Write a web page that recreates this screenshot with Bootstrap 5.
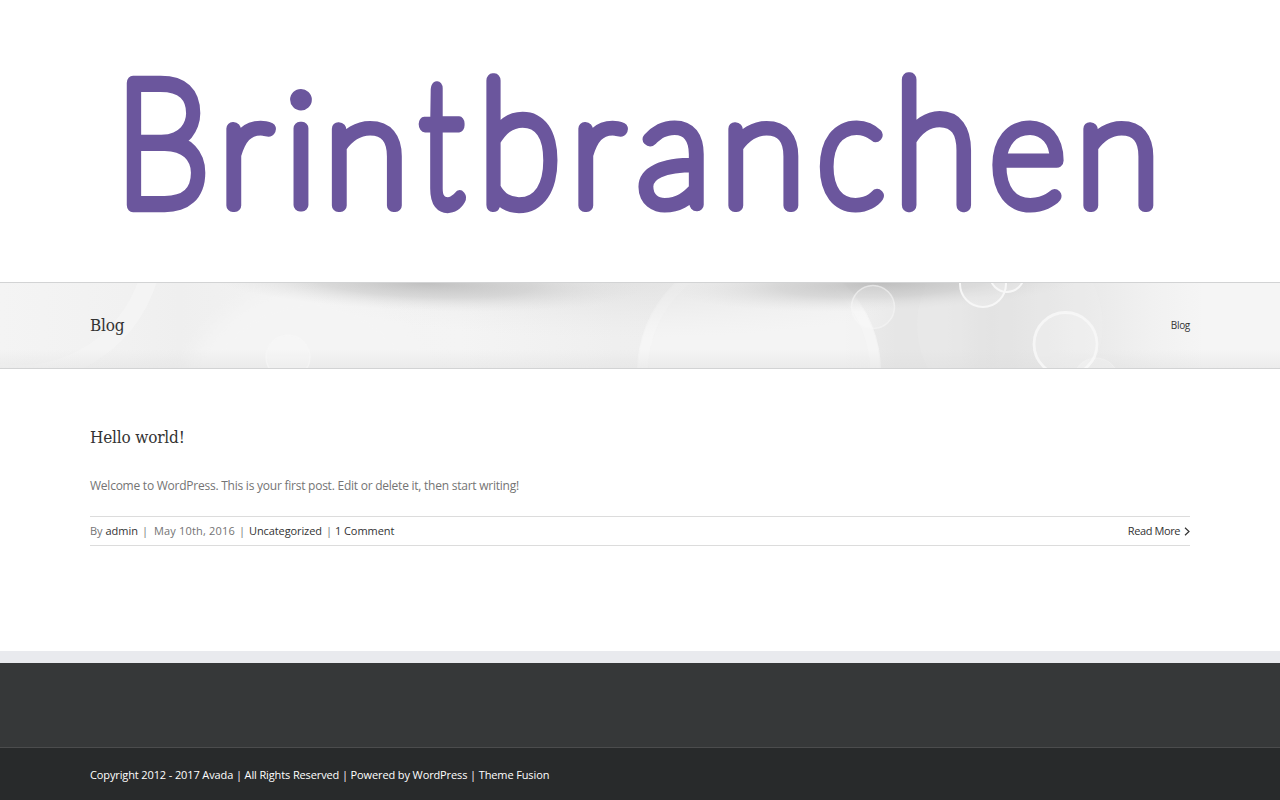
<!DOCTYPE html>
<html lang="en">
<head>
  <meta charset="UTF-8">
  <meta name="viewport" content="width=device-width, initial-scale=1">
  <title>Blog - Brintbranchen</title>
  <link href="https://cdn.jsdelivr.net/npm/bootstrap@5.3.0/dist/css/bootstrap.min.css" rel="stylesheet">
  <style>
    body {
      font-family: "Open Sans", "Noto Sans", sans-serif;
      font-size: 12px;
      line-height: 20px;
      color: #747474;
      background: #fff;
    }
    a { color: #333; text-decoration: none; }
    .site-wrap { width: 1100px; margin: 0 auto; }
    .site-header { height: 282px; }
    /* thin letters with a thick round outline */
    .logo-text {
      font-family: Lato, sans-serif;
      font-weight: 100;
      font-size: 156px;
      fill: #6b569d;
      stroke: #6b569d;
      stroke-width: 13;
      stroke-linejoin: round;
      stroke-linecap: round;
    }
    .logo-text .cap { font-size: 175px; stroke-width: 14.5; }
    .logo-text .tall { font-size: 170px; stroke-width: 14; }
    .title-bar {
      height: 87px;
      border-top: 1px solid #d2d3d4;
      border-bottom: 1px solid #d2d3d4;
      overflow: hidden;
    }
    .slab {
      font-family: "DejaVu Serif Condensed", "DejaVu Serif", serif;
      font-size: 17px;
      font-weight: 400;
      letter-spacing: -.17px;
      color: #333;
      line-height: 27px;
      margin: 0;
    }
    .crumb { font-size: 10px; line-height: 18px; padding-bottom: 1px; letter-spacing: -.3px; color: #333; }
    .post-area { height: 282px; padding-top: 55px; }
    .post-text { margin-top: 25px; letter-spacing: -.24px; }
    .post-meta {
      height: 30px;
      margin-top: 20px;
      border-top: 1px solid #dcdcdc;
      border-bottom: 1px solid #dcdcdc;
      font-size: 11px;
    }
    .meta-date { letter-spacing: .18px; margin-left: -1px; }
    .meta-cat { letter-spacing: -.1px; }
    .meta-comments { letter-spacing: -.05px; margin-left: -1px; }
    .read-more { letter-spacing: -.4px; }
    .footer-widgets { height: 96px; background: #363839; border-top: 12px solid #e9eaee; }
    .footer-copy {
      height: 53px;
      padding-top: 2px;
      background: #282a2b;
      border-top: 1px solid #4b4c4d;
      color: #fff;
      font-size: 11px;
      letter-spacing: -.12px;
    }
    .footer-copy a { color: #fff; }
  </style>
</head>
<body>

<!-- Header -->
<header class="site-header">
  <svg class="d-block mx-auto" width="1100" height="282" viewBox="90 0 1100 282" role="img" aria-label="Brintbranchen">
    <g class="logo-text">
      <text class="cap" transform="translate(115.500 204.500) scale(.865 1)">B</text>
      <text y="205" x="218.500 284.700 324">rin</text>
      <text transform="translate(420 204.500) scale(.84 1.100)">t</text>
      <text class="tall" transform="translate(478.700 204.800) scale(.885 1.020)">b</text>
      <text y="205" x="570.500 637 720.500">ran</text>
      <text transform="translate(817 205) scale(.925 1)">c</text>
      <text class="tall" transform="translate(894 204.500) scale(.91 1.020)">h</text>
      <text transform="translate(989.500 205) scale(.945 1)">e</text>
      <text y="205" x="1075.500">n</text>
    </g>
  </svg>
</header>

<!-- Page title bar -->
<section class="title-bar position-relative">
  <svg class="position-absolute top-0 start-0" width="1280" height="85" viewBox="0 283 1280 85" aria-hidden="true">
    <defs>
      <linearGradient id="base">
        <stop offset="0" stop-color="#f4f4f4"/>
        <stop offset=".1" stop-color="#f1f1f1"/>
        <stop offset=".14" stop-color="#efefef"/>
        <stop offset=".25" stop-color="#f3f3f3"/>
        <stop offset=".36" stop-color="#f4f4f4"/>
        <stop offset=".48" stop-color="#efefef"/>
        <stop offset=".66" stop-color="#ededed"/>
        <stop offset=".7" stop-color="#e6e6e6"/>
        <stop offset=".74" stop-color="#e6e6e6"/>
        <stop offset=".775" stop-color="#dfdfdf"/>
        <stop offset=".84" stop-color="#e8e8e8"/>
        <stop offset=".9" stop-color="#f1f1f1"/>
        <stop offset=".94" stop-color="#f5f5f5"/>
        <stop offset="1" stop-color="#f5f5f5"/>
      </linearGradient>
      <linearGradient id="low" x2="0" y2="1">
        <stop offset="0" stop-color="#ddd" stop-opacity="0"/>
        <stop offset="1" stop-color="#ddd" stop-opacity=".4"/>
      </linearGradient>
      <radialGradient id="shade">
        <stop offset="0" stop-color="#b4b4b4" stop-opacity=".8"/>
        <stop offset=".5" stop-color="#c0c0c0" stop-opacity=".5"/>
        <stop offset="1" stop-color="#ddd" stop-opacity="0"/>
      </radialGradient>
      <radialGradient id="mid">
        <stop offset="0" stop-color="#d4d4d4" stop-opacity=".45"/>
        <stop offset="1" stop-color="#e4e4e4" stop-opacity="0"/>
      </radialGradient>
      <filter id="soft"><feGaussianBlur stdDeviation="9"/></filter>
    </defs>
    <rect y="283" width="1280" height="85" fill="url(#base)"/>
    <circle cx="20" cy="240" r="134" fill="none" stroke="#f5f5f5" stroke-width="18" stroke-opacity=".7"/>
    <circle cx="310" cy="415" r="130" fill="#f4f4f4" filter="url(#soft)"/>
    <circle cx="759" cy="371" r="122" fill="#f5f5f5" fill-opacity=".85"/>
    <circle cx="759" cy="371" r="116" fill="none" stroke="#f7f7f7" stroke-width="10" stroke-opacity=".5"/>
    <circle cx="1010" cy="325" r="93" fill="#eee" fill-opacity=".25"/>
    <ellipse cx="620" cy="283" rx="330" ry="55" fill="url(#mid)"/>
    <!-- drop shadow under the header -->
    <ellipse cx="425" cy="283" rx="215" ry="28" fill="url(#shade)" transform="rotate(2 425 283)"/>
    <ellipse cx="880" cy="283" rx="205" ry="28" fill="url(#shade)" transform="rotate(-2 880 283)"/>
    <rect y="350" width="1280" height="18" fill="url(#low)"/>
    <g fill="#fff" fill-opacity=".2" stroke="#f7f7f7">
      <circle cx="288" cy="357" r="22" stroke-width="1.500" stroke-opacity=".6"/>
      <circle cx="873" cy="307" r="21.500" stroke-width="1.500" stroke-opacity=".6"/>
      <circle cx="983" cy="284" r="23" stroke-width="2"/>
      <circle cx="1007" cy="275" r="17" stroke-width="2"/>
      <circle cx="1065.500" cy="344" r="31.500" stroke-width="2.800" stroke-opacity=".9"/>
      <circle cx="1096" cy="381" r="23" stroke-opacity=".3"/>
    </g>
  </svg>
  <div class="site-wrap h-100 d-flex justify-content-between align-items-center position-relative">
    <h1 class="slab">Blog</h1>
    <span class="crumb">Blog</span>
  </div>
</section>

<!-- Posts -->
<main class="post-area">
  <article class="site-wrap">
    <h2 class="slab"><a href="#">Hello world!</a></h2>
    <p class="post-text mb-0">Welcome to WordPress. This is your first post. Edit or delete it, then start writing!</p>
    <div class="post-meta d-flex justify-content-between align-items-center">
      <div>By <a href="#">admin</a><span class="mx-1">|</span> <span class="meta-date">May 10th, 2016</span><span class="mx-1">|</span><a class="meta-cat" href="#">Uncategorized</a><span class="mx-1">|</span><a class="meta-comments" href="#">1 Comment</a></div>
      <a class="read-more d-flex align-items-center" href="#">Read More
        <svg class="ms-1" width="6" height="9" viewBox="0 0 6 9" fill="none" stroke="#333" stroke-width="1.200"><path d="M1 .7 5 4.500 1 8.300"/></svg>
      </a>
    </div>
  </article>
</main>

<!-- Footer -->
<footer>
  <div class="footer-widgets"></div>
  <div class="footer-copy d-flex align-items-center">
    <div class="site-wrap">Copyright 2012 - 2017 Avada | All Rights Reserved | Powered by <a href="#">WordPress</a> | <a href="#">Theme Fusion</a></div>
  </div>
</footer>

<script src="https://cdn.jsdelivr.net/npm/bootstrap@5.3.0/dist/js/bootstrap.bundle.min.js"></script>
</body>
</html>
